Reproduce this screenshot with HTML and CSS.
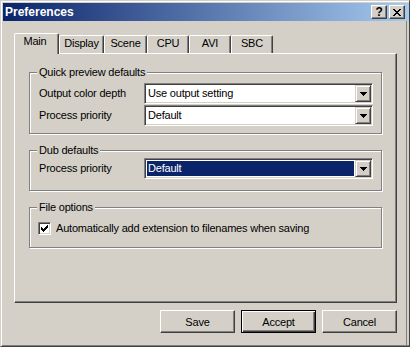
FILE: index.html
```html
<!DOCTYPE html>
<html>
<head>
<meta charset="utf-8">
<title>Preferences</title>
<link rel="stylesheet" href="styles.css">
</head>
<body>
<div class="window">
  <div class="caption">
    <span class="caption-title">Preferences</span>
    <div class="caption-buttons">
      <span class="cap-btn help">?</span>
      <span class="cap-btn close">
        <svg width="8" height="7" viewBox="0 0 8 7" shape-rendering="crispEdges"><path d="M0 0h2v1H0z M6 0h2v1H6z M1 1h2v1H1z M5 1h2v1H5z M2 2h4v1H2z M3 3h2v1H3z M2 4h4v1H2z M1 5h2v1H1z M5 5h2v1H5z M0 6h2v1H0z M6 6h2v1H6z" fill="#000"/></svg>
      </span>
    </div>
  </div>
  <div class="client">
    <div class="tabs">
      <div class="tab tab-main selected">Main</div>
      <div class="tab tab-display">Display</div>
      <div class="tab tab-scene">Scene</div>
      <div class="tab tab-std">CPU</div>
      <div class="tab tab-std">AVI</div>
      <div class="tab tab-std">SBC</div>
    </div>
    <div class="panel">
      <div class="group group-quick">
        <div class="group-title">Quick preview defaults</div>
        <div class="fields">
          <div class="row">
            <span class="label">Output color depth</span>
            <div class="combo">
              <span class="combo-text">Use output setting</span>
              <span class="combo-btn"><svg width="7" height="4" viewBox="0 0 7 4" shape-rendering="crispEdges"><path d="M0 0h7v1H0z M1 1h5v1H1z M2 2h3v1H2z M3 3h1v1H3z" fill="#000"/></svg></span>
            </div>
          </div>
          <div class="row">
            <span class="label">Process priority</span>
            <div class="combo">
              <span class="combo-text">Default</span>
              <span class="combo-btn"><svg width="7" height="4" viewBox="0 0 7 4" shape-rendering="crispEdges"><path d="M0 0h7v1H0z M1 1h5v1H1z M2 2h3v1H2z M3 3h1v1H3z" fill="#000"/></svg></span>
            </div>
          </div>
        </div>
      </div>
      <div class="group group-dub">
        <div class="group-title">Dub defaults</div>
        <div class="fields">
          <div class="row">
            <span class="label">Process priority</span>
            <div class="combo focused">
              <span class="combo-text">Default</span>
              <span class="combo-btn"><svg width="7" height="4" viewBox="0 0 7 4" shape-rendering="crispEdges"><path d="M0 0h7v1H0z M1 1h5v1H1z M2 2h3v1H2z M3 3h1v1H3z" fill="#000"/></svg></span>
            </div>
          </div>
        </div>
      </div>
      <div class="group group-file">
        <div class="group-title">File options</div>
        <div class="check-row">
          <span class="checkbox"><svg width="7" height="7" viewBox="0 0 7 7" shape-rendering="crispEdges"><path d="M0 2h1v3H0z M1 3h1v3H1z M2 4h1v3H2z M3 3h1v3H3z M4 2h1v3H4z M5 1h1v3H5z M6 0h1v3H6z" fill="#000"/></svg></span>
          <span class="check-label">Automatically add extension to filenames when saving</span>
        </div>
      </div>
    </div>
    <div class="footer">
      <span class="btn">Save</span>
      <span class="btn default">Accept</span>
      <span class="btn">Cancel</span>
    </div>
  </div>
</div>
</body>
</html>
```

FILE: styles.css
```css
html, body {
  margin: 0;
  padding: 0;
  background: #d4d0c8;
}

.window {
  width: 410px;
  height: 347px;
  box-sizing: border-box;
  overflow: hidden;
  background: #d4d0c8;
  border: 1px solid;
  border-color: #d4d0c8 #404040 #404040 #d4d0c8;
  box-shadow: inset 1px 1px 0 #fff, inset 0 -1px 0 #808080;
  padding: 2px 0 2px 2px;
  font-family: "Liberation Sans", Arial, sans-serif;
  font-size: 11px;
  letter-spacing: -0.2px;
  color: #000;
}

.caption {
  height: 18px;
  display: flex;
  align-items: center;
  justify-content: space-between;
  padding: 0 4px 0 2px;
  background: linear-gradient(to right, #0a246a, #a6caf0);
}

.caption-title {
  color: #fff;
  font-weight: bold;
  font-size: 12px;
  line-height: 18px;
  letter-spacing: 0;
}

.caption-buttons {
  display: flex;
  gap: 2px;
}

.cap-btn {
  width: 16px;
  height: 14px;
  box-sizing: border-box;
  display: flex;
  align-items: center;
  justify-content: center;
  background: #d4d0c8;
  border: 1px solid;
  border-color: #fff #404040 #404040 #fff;
  box-shadow: inset -1px -1px 0 #808080;
}

.cap-btn.help {
  font-weight: bold;
  font-size: 12px;
  line-height: 12px;
  color: #000;
}

.client {
  height: 322px;
  margin-right: 2px;
  border-right: 1px solid #808080;
  padding: 12px 0 0 11px;
}

.tabs {
  display: flex;
  align-items: flex-end;
  height: 20px;
}

.tab {
  height: 18px;
  box-sizing: border-box;
  border: 1px solid;
  border-bottom: none;
  border-color: #fff #404040 transparent #fff;
  border-radius: 2px 2px 0 0;
  box-shadow: inset -1px 0 0 #808080;
  padding-top: 1px;
  line-height: 13px;
  text-align: center;
  background: #d4d0c8;
}

.tab-main { width: 45px; padding-right: 3px; }
.tab-display { width: 45px; }
.tab-scene { width: 43px; }
.tab-std { width: 42px; }

.tab.selected {
  height: 21px;
  margin-bottom: -1px;
  position: relative;
  z-index: 1;
}

.panel {
  width: 383px;
  height: 250px;
  box-sizing: border-box;
  border: 1px solid;
  border-color: #fff #404040 #404040 #fff;
  box-shadow: inset -1px -1px 0 #808080;
  padding-top: 18px;
}

.group {
  width: 353px;
  box-sizing: border-box;
  margin-left: 14px;
  border: 1px solid #808080;
  box-shadow: 1px 1px 0 #fff, inset 1px 1px 0 #fff;
  padding: 0 8px 0 9px;
}

.group-title {
  width: fit-content;
  margin: -7px 0 0 -2px;
  padding: 0 2px;
  line-height: 13px;
  background: #d4d0c8;
}

.group-quick { padding-bottom: 7px; }
.group-quick .fields { margin-top: 4px; }

.group-dub { margin-top: 16px; padding-bottom: 11px; }
.group-dub .fields { margin-top: 1px; }

.group-file { margin-top: 16px; padding-bottom: 12px; }

.fields {
  display: flex;
  flex-direction: column;
  gap: 1px;
}

.row {
  display: flex;
  align-items: center;
  height: 21px;
}

.label {
  width: 105px;
  line-height: 13px;
}

.combo {
  width: 229px;
  height: 21px;
  box-sizing: border-box;
  display: flex;
  border: 1px solid;
  border-color: #808080 #fff #fff #808080;
  box-shadow: inset 1px 1px 0 #404040, inset -1px -1px 0 #d4d0c8;
  padding: 1px;
  background: #fff;
}

.combo-text {
  flex: 1;
  padding-left: 2px;
  line-height: 17px;
  white-space: nowrap;
}

.combo.focused .combo-text {
  margin: 1px;
  padding-left: 1px;
  line-height: 15px;
  background: #0a246a;
  color: #fff;
}

.combo-btn {
  width: 16px;
  height: 17px;
  box-sizing: border-box;
  display: flex;
  align-items: center;
  justify-content: center;
  background: #d4d0c8;
  border: 1px solid;
  border-color: #d4d0c8 #404040 #404040 #d4d0c8;
  box-shadow: inset 1px 1px 0 #fff, inset -1px -1px 0 #808080;
}

.check-row {
  display: flex;
  align-items: center;
  margin-top: 8px;
  margin-left: -1px;
  height: 13px;
}

.checkbox {
  width: 13px;
  height: 13px;
  box-sizing: border-box;
  display: flex;
  align-items: center;
  justify-content: center;
  background: #fff;
  border: 1px solid;
  border-color: #808080 #fff #fff #808080;
  box-shadow: inset 1px 1px 0 #404040, inset -1px -1px 0 #d4d0c8;
  margin-right: 5px;
}

.check-label {
  line-height: 13px;
  white-space: nowrap;
}

.footer {
  width: 383px;
  margin-top: 7px;
  display: flex;
  justify-content: flex-end;
  gap: 6px;
}

.btn {
  width: 75px;
  height: 23px;
  box-sizing: border-box;
  display: flex;
  align-items: center;
  justify-content: center;
  background: #d4d0c8;
  border: 1px solid;
  border-color: #fff #404040 #404040 #fff;
  box-shadow: inset -1px -1px 0 #808080;
}

.btn.default {
  border-color: #000;
  box-shadow: inset 1px 1px 0 #fff, inset -1px -1px 0 #404040, inset -2px -2px 0 #808080;
}
```
